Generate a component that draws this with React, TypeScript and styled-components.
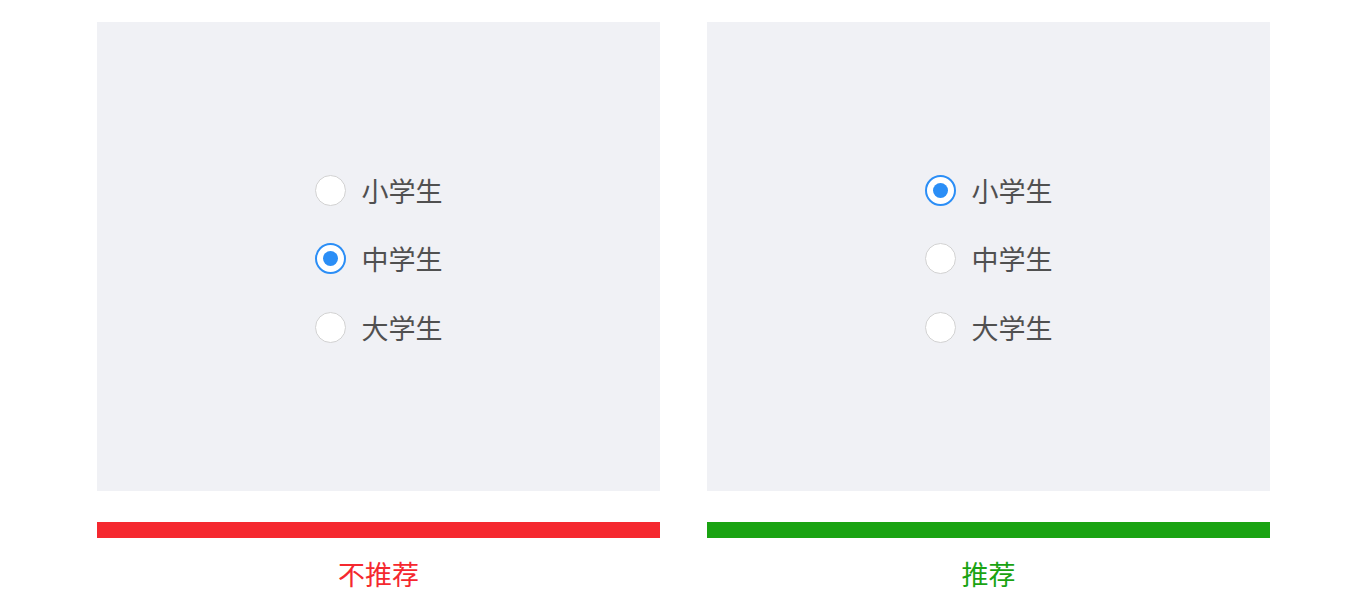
import styled, { createGlobalStyle } from 'styled-components';

const GlobalStyle = createGlobalStyle`
  html, body {
    margin: 0;
    padding: 0;
    background: #ffffff;
    font-family: 'Noto Sans CJK SC', 'Noto Sans', sans-serif;
  }
`;

const Page = styled.div`
  display: flex;
  gap: 47px;
  padding: 22px 0 0 97px;
  width: 1368px;
  height: 600px;
  box-sizing: border-box;
`;

const Column = styled.div`
  display: flex;
  flex-direction: column;
  width: 563px;
`;

const Panel = styled.div`
  height: 469px;
  background: #f0f1f5;
  display: flex;
  align-items: center;
  justify-content: center;
`;

const Group = styled.div`
  display: flex;
  flex-direction: column;
  gap: 37.5px;
  margin-top: 4px;
`;

const Option = styled.label`
  display: flex;
  align-items: center;
  gap: 16px;
  height: 31px;
  font-size: 27px;
  color: #505050;
  cursor: pointer;
`;

const Radio = styled.span<{ $checked?: boolean }>`
  width: 31px;
  height: 31px;
  box-sizing: border-box;
  border-radius: 50%;
  background: #ffffff;
  border: ${(p) => (p.$checked ? '2px solid #2b8ef6' : '1.5px solid #d2d2d2')};
  display: flex;
  align-items: center;
  justify-content: center;

  &::after {
    content: '';
    display: ${(p) => (p.$checked ? 'block' : 'none')};
    width: 15px;
    height: 15px;
    border-radius: 50%;
    background: #2b8ef6;
  }
`;

const Bar = styled.div<{ $color: string }>`
  margin-top: 31px;
  height: 16px;
  background: ${(p) => p.$color};
`;

const Caption = styled.div<{ $color: string }>`
  margin-top: 18px;
  text-align: center;
  font-size: 27px;
  line-height: 36px;
  color: ${(p) => p.$color};
`;

const options = ['小学生', '中学生', '大学生'];

function Example({ selected, color, caption }: { selected: number; color: string; caption: string }) {
  return (
    <Column>
      <Panel>
        <Group>
          {options.map((o, i) => (
            <Option key={o}>
              <Radio $checked={i === selected} />
              {o}
            </Option>
          ))}
        </Group>
      </Panel>
      <Bar $color={color} />
      <Caption $color={color}>{caption}</Caption>
    </Column>
  );
}

export default function App() {
  return (
    <>
      <GlobalStyle />
      <Page>
        <Example selected={1} color="#f5282f" caption="不推荐" />
        <Example selected={0} color="#1aa312" caption="推荐" />
      </Page>
    </>
  );
}
